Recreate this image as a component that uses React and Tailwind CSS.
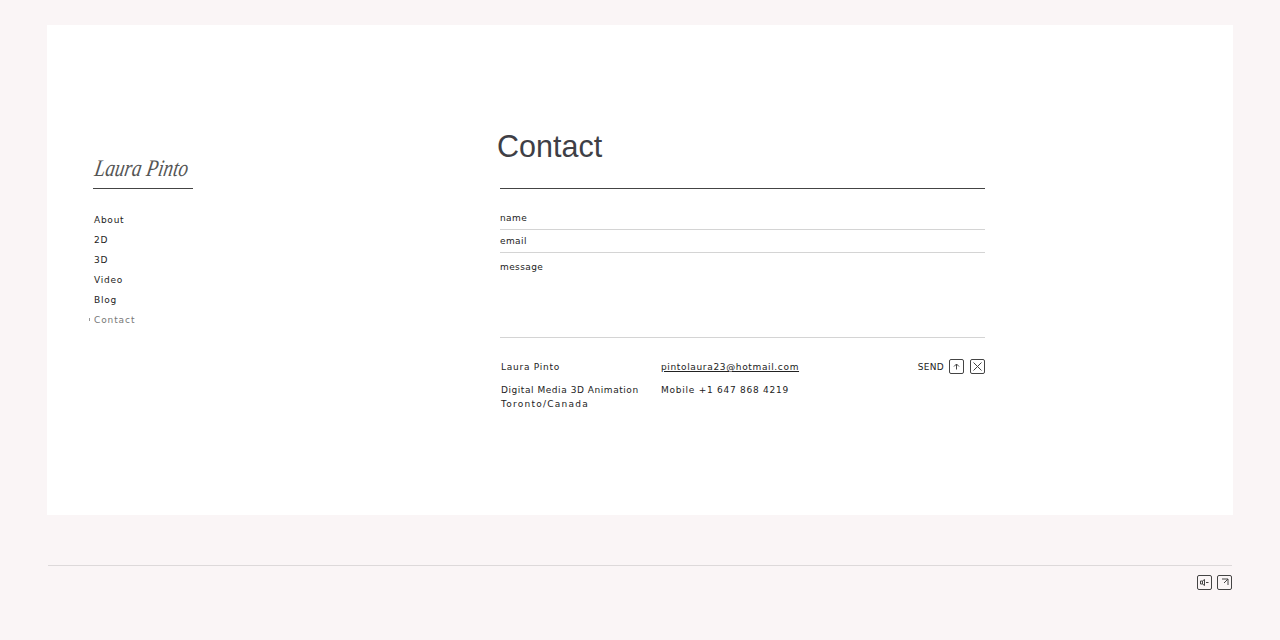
const NAV = ["About", "2D", "3D", "Video", "Blog", "Contact"];
const FONT = "font-['DejaVu_Sans',sans-serif] text-[9px] leading-[14px] tracking-[0.75px] text-[#222]";

function IconBox({ children }) {
  return (
    <span className="w-[15px] h-[15px] rounded-[2px] border border-[#444] flex items-center justify-center">
      <svg width="11" height="11" viewBox="0 0 11 11" fill="none" stroke="#444" strokeWidth="1">
        {children}
      </svg>
    </span>
  );
}

export default function App() {
  return (
    <div className={`min-h-[640px] bg-[#faf5f6] pt-[25px] ${FONT}`}>
      <div className="mx-[47px] h-[490px] bg-white flex">
        <div className="w-[453px] pl-[46px] pt-[125px] shrink-0">
          <div className="w-[100px] h-[39px] border-b border-[#444] pl-[2px]">
            <span className="block font-['Liberation_Serif',serif] italic text-[19px] leading-[36px] tracking-[0.1px] text-[#555] whitespace-nowrap -skew-x-12 scale-y-[1.25]">
              Laura Pinto
            </span>
          </div>
          <nav className="mt-[21px] pl-[1px]">
            {NAV.map((item) => (
              <div key={item} className={`relative h-[20px] leading-[20px] ${item === "Contact" ? "text-[#777] tracking-[0.9px]" : ""}`}>
                {item === "Contact" && (
                  <span className="absolute left-[-5px] top-[8px] w-[1px] h-[3px] bg-[#999]" />
                )}
                {item}
              </div>
            ))}
          </nav>
        </div>

        <div className="w-[485px] pt-[103px]">
          <h1 className="h-[61px] border-b border-[#444] font-['Liberation_Sans',sans-serif] text-[30.5px] leading-[36px] tracking-normal text-[#3f3f46]">
            <span className="block -ml-[3px]">Contact</span>
          </h1>
          <form className="tracking-[0.4px]">
            <input
              placeholder="name"
              className="block w-full h-[41px] pt-[17px] border-b border-[#d4d4d4] outline-none placeholder:text-[#222]"
            />
            <input
              placeholder="email"
              className="block w-full h-[23px] border-b border-[#d4d4d4] outline-none placeholder:text-[#222]"
            />
            <textarea
              placeholder="message"
              className="block w-full h-[85px] pt-[7px] border-b border-[#d4d4d4] outline-none resize-none placeholder:text-[#222]"
            />
          </form>
          <div className="flex mt-[22px]">
            <div className="w-[160px] pl-[1px]">
              <p>Laura Pinto</p>
              <p className="mt-[9px] tracking-[0.55px]">Digital Media 3D Animation</p>
              <p className="tracking-[1.25px]">Toronto/Canada</p>
            </div>
            <div className="pl-[1px]">
              <a className="underline tracking-[0.65px]">pintolaura23@hotmail.com</a>
              <p className="mt-[9px]">Mobile +1 647 868 4219</p>
            </div>
            <div className="ml-auto flex items-start">
              <span className="mr-[5px] tracking-[0.3px]">SEND</span>
              <span className="-mt-[1px]">
                <IconBox>
                  <path d="M5.5 8.5V3M3 5.5L5.5 3L8 5.5" />
                </IconBox>
              </span>
              <span className="ml-[6px] -mt-[1px]">
                <IconBox>
                  <path d="M1.5 1.5L9.5 9.5M9.5 1.5L1.5 9.5" />
                </IconBox>
              </span>
            </div>
          </div>
        </div>
      </div>

      <div className="mx-[48px] mt-[50px] border-t border-[#ddd9da] pt-[9px] flex justify-end gap-[5px]">
        <IconBox>
          <path d="M1.5 4H3.5V7H1.5ZM3.5 4L5.5 2.5V8.5L3.5 7M7 5.5H9.5" />
        </IconBox>
        <IconBox>
          <path d="M3 2H9V8M9 2L5 6" />
        </IconBox>
      </div>
    </div>
  );
}
